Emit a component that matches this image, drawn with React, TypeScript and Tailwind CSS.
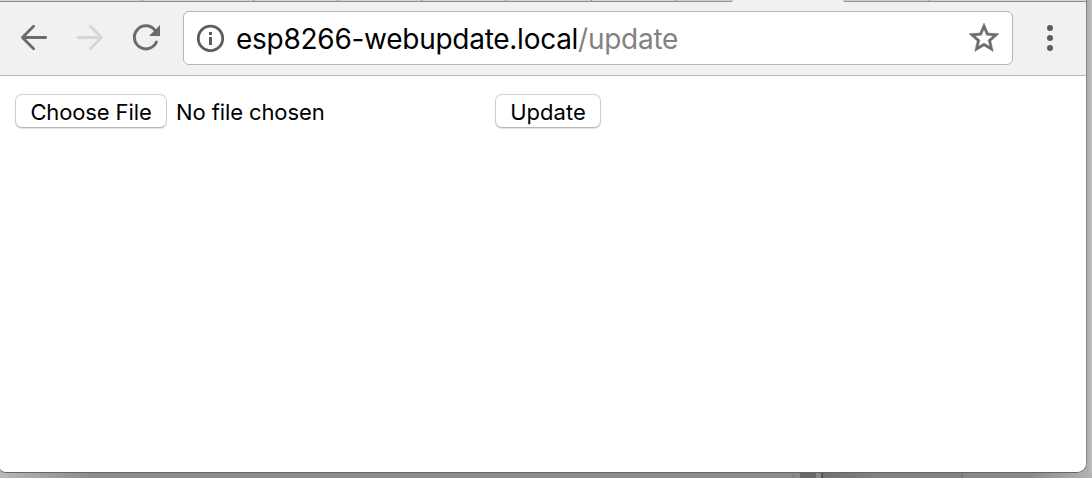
import React from "react";

const leftTabs = ["w-[143px]", "w-[111px]", "w-[84px]", "w-[84px]", "w-[84px]", "w-[86px]", "w-[84px]"];

function TabStrip() {
  return (
    <div className="flex h-[2px] shrink-0">
      {leftTabs.map((w, i) => (
        <div key={i} className={`${w} h-full shrink-0 border-r border-b border-[#8f8f8f] bg-[#d3d7d4]`} />
      ))}
      <div className="h-full w-[57px] shrink-0 rounded-br-[2px] border-b border-[#8f8f8f] bg-[#d0d0d0]" />
      <div className="h-full w-[110px] shrink-0" />
      <div className="h-full w-[87px] shrink-0 rounded-bl-[2px] border-r border-b border-[#8f8f8f] bg-[#d0d0d0]" />
      <div className="h-full flex-1 border-b border-[#8f8f8f] bg-[#d3d7d4]" />
    </div>
  );
}

function Arrow({ forward = false }: { forward?: boolean }) {
  return (
    <svg
      width="28"
      height="28"
      viewBox="0 0 28 28"
      fill="none"
      strokeWidth="2.8"
      strokeLinecap="round"
      strokeLinejoin="round"
      className={forward ? "shrink-0 -scale-x-100 stroke-[#d6d6d6]" : "shrink-0 stroke-[#6b6b6b]"}
    >
      <path d="M25.7 13.5H2.5M13.6 2.2L2.4 13.5l11.2 11.3" />
    </svg>
  );
}

function Toolbar() {
  return (
    <div className="flex h-[74px] shrink-0 items-start border-b border-[#b5b5b5] pt-[9px] pr-[26px] pl-[20px]">
      <div className="flex h-[54px] items-center">
        <Arrow />
        <div className="ml-[28px] flex">
          <Arrow forward />
        </div>
        <svg width="32" height="32" viewBox="0 0 32 32" className="ml-[26px] shrink-0">
          <path d="M24.8 8.1A11.5 11.5 0 1 0 26.4 20" fill="none" stroke="#6b6b6b" strokeWidth="3" strokeLinecap="round" />
          <path d="M30 3v11H19z" fill="#6b6b6b" />
        </svg>
      </div>
      <div className="ml-[21px] flex h-[54px] w-[830px] shrink-0 items-center rounded-[6px] border border-[#b5b5b5] bg-white pr-[10px] pl-[12px]">
        <svg width="30" height="30" viewBox="0 0 30 30" className="shrink-0">
          <circle cx="14.5" cy="15.4" r="12.2" fill="none" stroke="#5d5d5d" strokeWidth="2.8" />
          <path d="M13 9h3v3h-3zM13 14h3v8h-3z" fill="#5d5d5d" />
        </svg>
        <div className="ml-[10px] flex-1 pt-[2px] whitespace-nowrap text-[28px] leading-[36px] tracking-[-0.27px] text-black">
          esp8266-webupdate.local<span className="text-[#828282]">/update</span>
        </div>
        <svg width="36" height="36" viewBox="0 0 24 24" className="shrink-0" fill="#6b6b6b" stroke="#6b6b6b" strokeWidth="0.3">
          <path d="M22 9.24l-7.19-.62L12 2 9.19 8.63 2 9.24l5.46 4.73L5.82 21 12 17.27 18.18 21l-1.63-7.03L22 9.24zM12 15.4l-3.76 2.27 1-4.28-3.32-2.88 4.38-.38L12 6.1l1.71 4.04 4.38.38-3.32 2.88 1 4.28L12 15.4z" />
        </svg>
      </div>
      <div className="ml-auto flex h-[54px] w-[20px] flex-col items-center justify-center gap-[4px]">
        <span className="size-[6px] rounded-full bg-[#5d5d5d]" />
        <span className="size-[6px] rounded-full bg-[#5d5d5d]" />
        <span className="size-[6px] rounded-full bg-[#5d5d5d]" />
      </div>
    </div>
  );
}

const button =
  "flex h-[34px] shrink-0 items-center justify-center rounded-[7px] border border-[#d0d0d0] border-b-[#b8b8b8] bg-white pt-[2px] whitespace-nowrap shadow-[0_1px_1px_rgba(0,0,0,0.12)]";

export default function App() {
  return (
    <div
      className="flex h-[478px] w-[1092px] flex-col overflow-hidden bg-[#adadad]"
      style={{ fontFamily: 'Inter, "Liberation Sans", sans-serif' }}
    >
      <div className="flex h-[473px] shrink-0">
        <div className="flex w-[1087px] shrink-0 flex-col overflow-hidden rounded-br-[10px] rounded-bl-[6px] border-r border-b border-r-[#858585] border-b-[#666666] bg-[#f1f1f1]">
          <TabStrip />
          <Toolbar />
          <main className="flex flex-1 items-start bg-white pt-[18px] pl-[15px] text-[22px] leading-[28px] text-black">
            <button className={`${button} w-[152px] tracking-[-0.12px]`}>Choose File</button>
            <span className="ml-[9px] flex h-[34px] w-[319px] items-center pt-[2px] tracking-[-0.1px]">No file chosen</span>
            <button className={`${button} w-[106px]`}>Update</button>
          </main>
        </div>
        <div className="flex-1 bg-linear-to-r from-[#aaaaaa] to-[#c2c2c2]" />
      </div>
      <div className="flex h-[5px] shrink-0">
        <div className="w-[90px] bg-linear-to-r from-[#b8b8b8] to-[#8c8c8c]" />
        <div className="w-[702px] bg-[#8c8c8c]" />
        <div className="w-[2px] bg-[#808080]" />
        <div className="w-[6px] bg-[#8b8b8b]" />
        <div className="w-[16px] bg-[#686868]" />
        <div className="w-[5px] bg-[#888888]" />
        <div className="w-[2px] bg-[#555555]" />
        <div className="w-[50px] bg-linear-to-r from-[#707070] to-[#808080]" />
        <div className="w-[88px] bg-[#828282]" />
        <div className="w-[2px] bg-[#777777]" />
        <div className="flex-1 bg-linear-to-r from-[#888888] via-[#888888] to-[#b5b5b5]" />
      </div>
    </div>
  );
}
